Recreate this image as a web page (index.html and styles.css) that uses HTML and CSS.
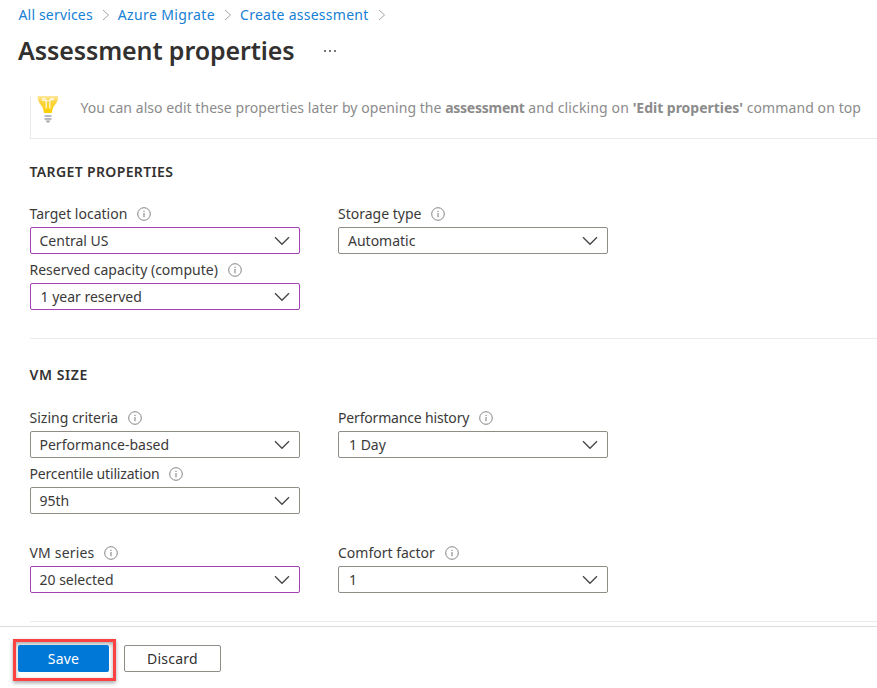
FILE: index.html
```html
<!DOCTYPE html>
<html lang="en">
<head>
<meta charset="utf-8">
<title>Assessment properties</title>
<link rel="stylesheet" href="styles.css">
</head>
<body>
<svg width="0" height="0" class="defs">
  <symbol id="info" viewBox="0 0 14 14"><circle cx="7" cy="7" r="6.3" fill="none" stroke="#858585" stroke-width="1"/><path d="M7 6v4.2M7 3.7v1.2" stroke="#858585" stroke-width="1.1"/></symbol>
  <symbol id="down" viewBox="0 0 16 10"><path d="M1 1.2l7 7 7-7" fill="none" stroke="#494847" stroke-width="1.35"/></symbol>
  <symbol id="next" viewBox="0 0 8 12"><path d="M1 1l5.500 5L1 11" fill="none" stroke="#a5a5a5" stroke-width="1"/></symbol>
</svg>
<nav class="crumbs">
  <a class="c1">All services</a><svg class="next"><use href="#next"/></svg>
  <a class="c2">Azure Migrate</a><svg class="next"><use href="#next"/></svg>
  <a class="c3">Create assessment</a><svg class="next"><use href="#next"/></svg>
</nav>
<header class="title"><h1>Assessment properties</h1><svg class="more" viewBox="0 0 14 4"><path d="M1 1h2v2H1zM6 1h2v2H6zM11 1h2v2h-2z" fill="#777"/></svg></header>
<main>
  <div class="tip">
    <svg class="bulb" viewBox="0 0 22 28">
      <defs><linearGradient id="glow" x1="0" y1="0" x2="0" y2="1"><stop offset="0" stop-color="#fde7a0"/><stop offset=".35" stop-color="#fbd440"/><stop offset="1" stop-color="#ffd000"/></linearGradient></defs>
      <path d="M.6 0h20.6c0 4.500-1.500 7-3.700 9.500-1.700 2-2.300 4.700-2.700 7.500H7c-.4-2.800-1-5.500-2.700-7.500C2.100 7 .6 4.500.6 0z" fill="url(#glow)"/>
      <path d="M9.200 12.500V5.200C9.200 3 5.500 1.200 5.500 3.200s7 2.300 11 0c0-2-3.700-.2-3.700 2v7.300" fill="none" stroke="#fff6d8" stroke-width="1.300"/>
      <path d="M7.500 20h7M7.500 23h7" stroke="#a4a4ad" stroke-width="1.500"/><path d="M8.500 24.500h5L12 26.400h-2z" fill="#a4a4ad"/>
    </svg>
    <p><span class="t1">You can also edit these properties later by opening the</span> <b class="t2">assessment</b> <span class="t3">and clicking on</span> <b class="t4">'Edit properties'</b> <span class="t5">command on top</span></p>
  </div>
  <section class="target">
    <h2>TARGET PROPERTIES</h2>
    <div class="grid">
      <div class="field"><label>Target location<svg><use href="#info"/></svg></label><div class="select changed"><span>Central US</span><svg><use href="#down"/></svg></div></div>
      <div class="field"><label>Storage type<svg><use href="#info"/></svg></label><div class="select"><span>Automatic</span><svg><use href="#down"/></svg></div></div>
      <div class="field"><label>Reserved capacity (compute)<svg><use href="#info"/></svg></label><div class="select changed"><span class="one">1 year reserved</span><svg><use href="#down"/></svg></div></div>
    </div>
  </section>
  <section class="size">
    <h2>VM SIZE</h2>
    <div class="grid">
      <div class="field"><label>Sizing criteria<svg><use href="#info"/></svg></label><div class="select"><span>Performance-based</span><svg><use href="#down"/></svg></div></div>
      <div class="field"><label class="tight">Performance history<svg><use href="#info"/></svg></label><div class="select"><span class="one">1 Day</span><svg><use href="#down"/></svg></div></div>
      <div class="field"><label class="tight">Percentile utilization<svg><use href="#info"/></svg></label><div class="select"><span>95th</span><svg><use href="#down"/></svg></div></div>
    </div>
    <div class="grid series">
      <div class="field"><label class="wide">VM series<svg><use href="#info"/></svg></label><div class="select changed"><span>20 selected</span><svg><use href="#down"/></svg></div></div>
      <div class="field"><label>Comfort factor<svg><use href="#info"/></svg></label><div class="select"><span class="one">1</span><svg><use href="#down"/></svg></div></div>
    </div>
  </section>
</main>
<footer>
  <div class="highlight"><button class="save">Save</button></div>
  <button class="discard">Discard</button>
</footer>
</body>
</html>
```
FILE: styles.css
```css
* { box-sizing: border-box; }
body { margin: 0; height: 688px; overflow: hidden; display: flex; flex-direction: column; background: #fff; color: #3b3a39; font: 14px/20px "Noto Sans", "Open Sans", sans-serif; }
.defs { position: absolute; }
.crumbs { display: flex; align-items: center; height: 30px; padding-left: 18.500px; color: #1580d4; }
.crumbs a { white-space: nowrap; }
.c1 { letter-spacing: .17px; }
.c2 { letter-spacing: .37px; }
.c3 { letter-spacing: .27px; }
.next { width: 8px; height: 12px; margin: 0 8px 0 9px; flex: none; }
.title { height: 66px; padding-left: 18px; display: flex; align-items: flex-start; }
h1 { margin: 2px 0 0; font-size: 25px; line-height: 36px; font-weight: 600; white-space: nowrap; letter-spacing: -.1px; width: 305px; color: #323130; }
.more { width: 14px; height: 4px; margin-top: 19px; }
main { padding-left: 29.500px; height: 530px; flex: none; }
.tip { display: flex; height: 43px; border-left: 1px solid #e9e9e9; border-bottom: 1px solid #e9e9e9; color: #8b8b8b; }
.bulb { width: 22px; height: 28px; margin-left: 6px; flex: none; }
.tip p { margin: 2px 0 0 22px; white-space: nowrap; }
.t1 { letter-spacing: .05px; }
.t2 { letter-spacing: -.25px; }
.t3 { letter-spacing: .14px; }
.t4 { letter-spacing: -.02px; }
.t5 { letter-spacing: .1px; }
section { border-bottom: 1px solid #ebebeb; }
h2 { margin: 0; font-size: 14px; line-height: 20px; font-weight: 600; letter-spacing: .36px; color: #323130; }
.size h2 { letter-spacing: .6px; }
.target { height: 200px; padding-top: 23px; }
.size { height: 283px; padding-top: 26px; }
.grid { display: grid; grid-template-columns: 270px 270px; column-gap: 38.500px; row-gap: 2px; margin-top: 20px; }
.size .grid { margin-top: 21px; }
.size .series { margin-top: 25px; }
.field { height: 54px; }
label { display: flex; align-items: center; height: 24px; white-space: nowrap; }
label.tight { letter-spacing: -.17px; }
label.wide { letter-spacing: .18px; }
label svg { width: 14px; height: 14px; margin-left: 10px; }
.select { height: 27px; margin-top: 1px; border: 1px solid #8e8d86; border-radius: 2px; padding: 0 9px; display: flex; align-items: center; justify-content: space-between; }
.select.changed { border-color: #a43fb6; }
.select .one { padding-left: 1px; }
.select svg { width: 16px; height: 10px; }
footer { flex: 1; border-top: 1px solid #dcdcdc; display: flex; padding: 12px 0 0 13px; gap: 8px; }
.highlight { width: 103px; height: 42px; border: 3px solid #fb4141; padding: 3px 2px; box-shadow: 0 2px 4px rgba(0,0,0,.35), inset 0 2px 4px rgba(0,0,0,.35); }
button { font: inherit; padding: 0; border-radius: 2px; height: 27px; letter-spacing: .25px; }
.save { display: block; width: 91px; border: 0; background: #0078d7; color: #fff; }
.discard { width: 97px; margin-top: 6px; border: 1px solid #8e8d86; background: #fff; color: #323130; }
```
